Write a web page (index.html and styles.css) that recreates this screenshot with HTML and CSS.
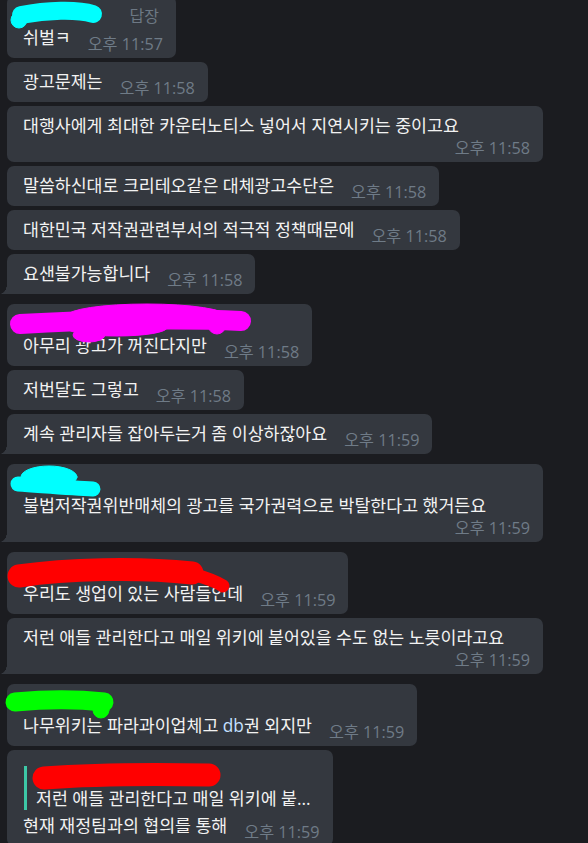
FILE: index.html
```html
<!DOCTYPE html>
<html lang="ko">
<head>
    <meta charset="UTF-8">
    <title>Chat</title>
    <link rel="stylesheet" href="styles.css">
</head>
<body>
    <div class="chat">
        <!-- group 1 -->
        <div class="group top-cut">
            <div class="msg">
                <svg class="scribble" width="120" height="40"><g stroke="#00ffff" stroke-linecap="round" fill="#00ffff"><path d="M14 19 C40 14 70 13 86 18" stroke-width="18"/><circle cx="12" cy="24" r="8"/></g></svg>
                <div class="name"><span class="reply-label">답장</span></div>
                <div class="row"><span class="text">쉬벌ㅋ</span><span class="time">오후 11:57</span></div>
            </div>
            <div class="msg">
                <div class="row"><span class="text">광고문제는</span><span class="time">오후 11:58</span></div>
            </div>
            <div class="msg full">
                <div class="row wrap"><span class="text">대행사에게 최대한 카운터노티스 넣어서 지연시키는 중이고요</span><span class="time">오후 11:58</span></div>
            </div>
            <div class="msg">
                <div class="row"><span class="text">말씀하신대로 크리테오같은 대체광고수단은</span><span class="time">오후 11:58</span></div>
            </div>
            <div class="msg">
                <div class="row"><span class="text">대한민국 저작권관련부서의 적극적 정책때문에</span><span class="time">오후 11:58</span></div>
            </div>
            <div class="msg last">
                <div class="row"><span class="text">요샌불가능합니다</span><span class="time">오후 11:58</span></div>
            </div>
        </div>

        <!-- group 2 -->
        <div class="group">
            <div class="msg">
                <svg class="scribble" width="260" height="45"><g stroke="#ff00ff" stroke-linecap="round" fill="#ff00ff"><path d="M13 20 C80 16 170 14 234 17" stroke-width="20"/><ellipse cx="140" cy="12" rx="80" ry="12"/><ellipse cx="110" cy="24" rx="50" ry="8"/><ellipse cx="82" cy="31" rx="16" ry="7"/><circle cx="210" cy="21" r="9"/></g></svg>
                <div class="name"></div>
                <div class="row"><span class="text">아무리 광고가 꺼진다지만</span><span class="time">오후 11:58</span></div>
            </div>
            <div class="msg">
                <div class="row"><span class="text">저번달도 그렇고</span><span class="time">오후 11:58</span></div>
            </div>
            <div class="msg last">
                <div class="row"><span class="text">계속 관리자들 잡아두는거 좀 이상하잖아요</span><span class="time">오후 11:59</span></div>
            </div>
        </div>

        <!-- group 3 -->
        <div class="group">
            <div class="msg full last">
                <svg class="scribble" width="120" height="40"><g stroke="#00ffff" stroke-linecap="round" fill="#00ffff"><path d="M11 20 C40 22 65 24 86 25" stroke-width="15"/><ellipse cx="42" cy="13" rx="28" ry="11"/></g></svg>
                <div class="name"></div>
                <div class="row wrap"><span class="text">불법저작권위반매체의 광고를 국가권력으로 박탈한다고 했거든요</span><span class="time">오후 11:59</span></div>
            </div>
        </div>

        <!-- group 4 -->
        <div class="group">
            <div class="msg">
                <svg class="scribble" width="240" height="45"><g stroke="#ff0000" stroke-linecap="round" fill="#ff0000"><path d="M12 24 C60 17 130 15 185 21" stroke-width="23"/><path d="M185 22 C200 26 210 30 216 34" stroke-width="13"/></g></svg>
                <div class="name"></div>
                <div class="row"><span class="text">우리도 생업이 있는 사람들인데</span><span class="time">오후 11:59</span></div>
            </div>
            <div class="msg full last">
                <div class="row wrap"><span class="text">저런 애들 관리한다고 매일 위키에 붙어있을 수도 없는 노릇이라고요</span><span class="time">오후 11:59</span></div>
            </div>
        </div>

        <!-- group 5 -->
        <div class="group">
            <div class="msg">
                <svg class="scribble" width="120" height="40"><g stroke="#00ff00" stroke-linecap="round" fill="#00ff00"><path d="M8 18 C40 15 70 15 97 18" stroke-width="19"/><circle cx="94" cy="26" r="8"/></g></svg>
                <div class="name"></div>
                <div class="row"><span class="text">나무위키는 파라과이업체고 <span class="latin">db</span>권 외지만</span><span class="time">오후 11:59</span></div>
            </div>
            <div class="msg">
                <svg class="scribble" width="230" height="50"><g stroke="#ff0000" stroke-linecap="round" fill="#ff0000"><path d="M37 28 C90 24 150 24 202 25" stroke-width="23"/></g></svg>
                <div class="reply">
                    <div class="reply-name"></div>
                    <div class="reply-text">저런 애들 관리한다고 매일 위키에 붙...</div>
                </div>
                <div class="row"><span class="text">현재 재정팀과의 협의를 통해</span><span class="time">오후 11:59</span></div>
            </div>
        </div>
    </div>
</body>
</html>
```

FILE: styles.css
```css
* {
    margin: 0;
    padding: 0;
    box-sizing: border-box;
}
body {
    background: #1b1c20;
    font-family: 'Open Sans', 'Noto Sans CJK KR', sans-serif;
    color: #f2f2f2;
    overflow: hidden;
    height: 843px;
}
.chat {
    display: flex;
    flex-direction: column;
    gap: 10px;
    padding-left: 7px;
}
.group {
    display: flex;
    flex-direction: column;
    gap: 4px;
}
.group.top-cut {
    margin-top: -4px;
}
.msg {
    position: relative;
    align-self: flex-start;
    max-width: 536px;
    background: #34383f;
    border-radius: 7px;
    padding: 9px 13px 9px 16px;
}
.msg.full {
    width: 536px;
}
.msg.last {
    border-bottom-left-radius: 0;
}
.msg.last::before {
    content: '';
    position: absolute;
    left: -7px;
    bottom: 0;
    width: 7px;
    height: 10px;
    background: radial-gradient(ellipse 7px 10px at 0 0, transparent 96%, #34383f 100%);
}
.scribble {
    position: absolute;
    left: 0;
    top: 0;
    overflow: visible;
    pointer-events: none;
    z-index: 2;
}
.name {
    height: 22px;
    display: flex;
    justify-content: flex-end;
    padding-right: 4px;
}
.reply-label {
    font-size: 16px;
    line-height: 22px;
    color: #6d7884;
}
.row {
    display: flex;
    align-items: flex-end;
}
.row.wrap {
    flex-direction: column;
    align-items: stretch;
}
.text {
    font-size: 17.3px;
    line-height: 22px;
    white-space: nowrap;
}
.latin {
    color: #c4e0ff;
}
.time {
    font-size: 16.2px;
    line-height: 18px;
    color: #6f7b87;
    margin-left: 17px;
    margin-bottom: -4px;
    white-space: nowrap;
}
.row.wrap .time {
    align-self: flex-end;
    margin-top: 2px;
}
.reply {
    margin: 7px 0 5px 1px;
    border-left: 3px solid #3dc8a7;
    padding-left: 9px;
}
.reply-name {
    height: 22px;
}
.reply-text {
    font-size: 17.3px;
    line-height: 22px;
    white-space: nowrap;
}
```
